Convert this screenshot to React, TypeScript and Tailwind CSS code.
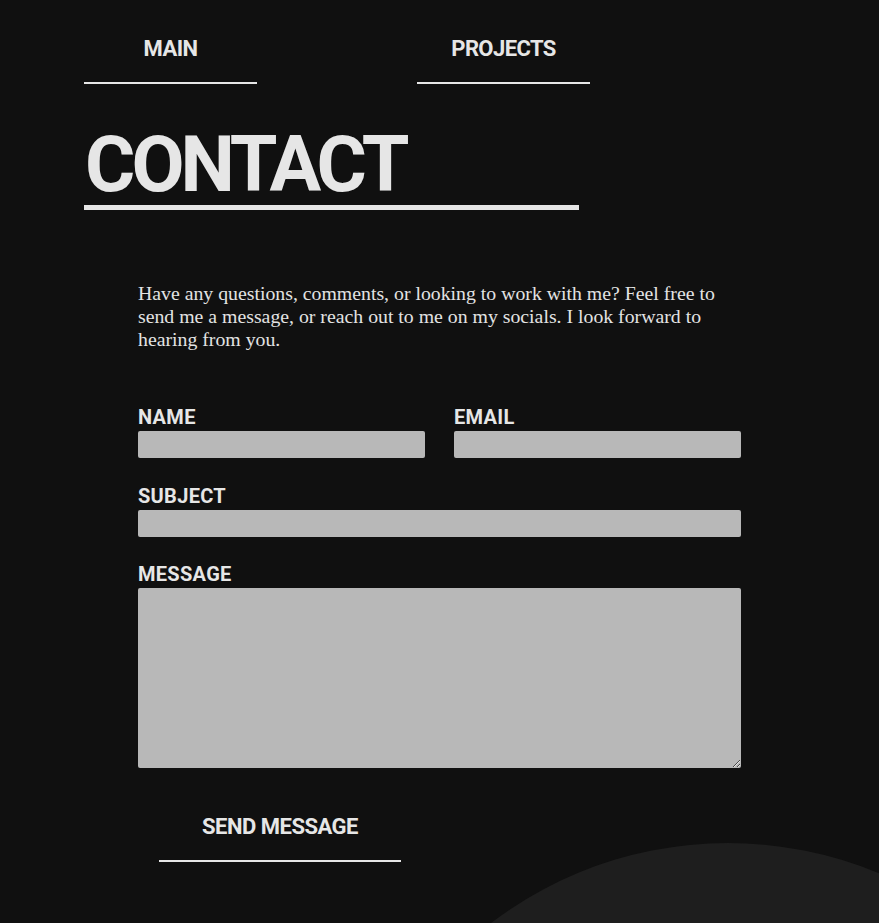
import React from 'react';

const heading = "font-['Roboto','Liberation_Sans',sans-serif] font-bold text-[#e6e6e6] uppercase";

export default function App() {
  return (
    <div className="relative min-h-screen overflow-hidden bg-[#101010]">
      {/* decorative circle bottom right */}
      <div className="absolute left-[337px] top-[843px] h-[782px] w-[782px] rounded-full bg-[#1e1e1e]" />

      <div className="relative px-[84px]">
        {/* Nav */}
        <nav className="flex gap-[160px]">
          {['Main', 'Projects'].map((item) => (
            <a
              key={item}
              href="#"
              className={`${heading} block w-[173px] border-b-2 border-[#e6e6e6] pt-[36px] pb-[20px] text-center text-[22px] leading-[26px] tracking-[-0.6px]`}
            >
              {item}
            </a>
          ))}
        </nav>

        {/* Title */}
        <h1
          className={`${heading} mt-[41px] w-[495px] border-b-[5px] border-[#e6e6e6] pl-[1px] text-[77px] leading-[80px] tracking-[-4px]`}
        >
          Contact
        </h1>

        <div className="ml-[54px] w-[603px]">
          <p className="mt-[72px] font-['Liberation_Serif','Times_New_Roman',serif] text-[19.8px] leading-[23px] text-[#e3e3e3]">
            Have any questions, comments, or looking to work with me? Feel free to send me a message, or
            reach out to me on my socials. I look forward to hearing from you.
          </p>

          {/* Form */}
          <form className="mt-[54px] flex flex-col gap-[25.5px]" onSubmit={(e) => e.preventDefault()}>
            <div className="grid grid-cols-2 gap-[29px]">
              <Field label="Name" />
              <Field label="Email" />
            </div>
            <Field label="Subject" />
            <div>
              <label className={`${heading} block text-[20px] leading-[24px] tracking-[0.3px]`}>Message</label>
              <textarea className="mt-[2px] block h-[180px] w-full rounded-[2px] bg-[#b8b8b8] outline-none" />
            </div>

            <button
              type="submit"
              className={`${heading} ml-[21px] w-[242px] border-b-2 border-[#e6e6e6] pt-[20px] pb-[20px] text-center text-[22px] leading-[26px] tracking-[-0.5px]`}
            >
              Send Message
            </button>
          </form>
        </div>
      </div>
    </div>
  );
}

function Field({ label }: { label: string }) {
  return (
    <div>
      <label className={`${heading} block text-[20px] leading-[24px] tracking-[0.3px]`}>{label}</label>
      <input className="mt-[2px] block h-[27px] w-full rounded-[2px] bg-[#b8b8b8] outline-none" />
    </div>
  );
}
